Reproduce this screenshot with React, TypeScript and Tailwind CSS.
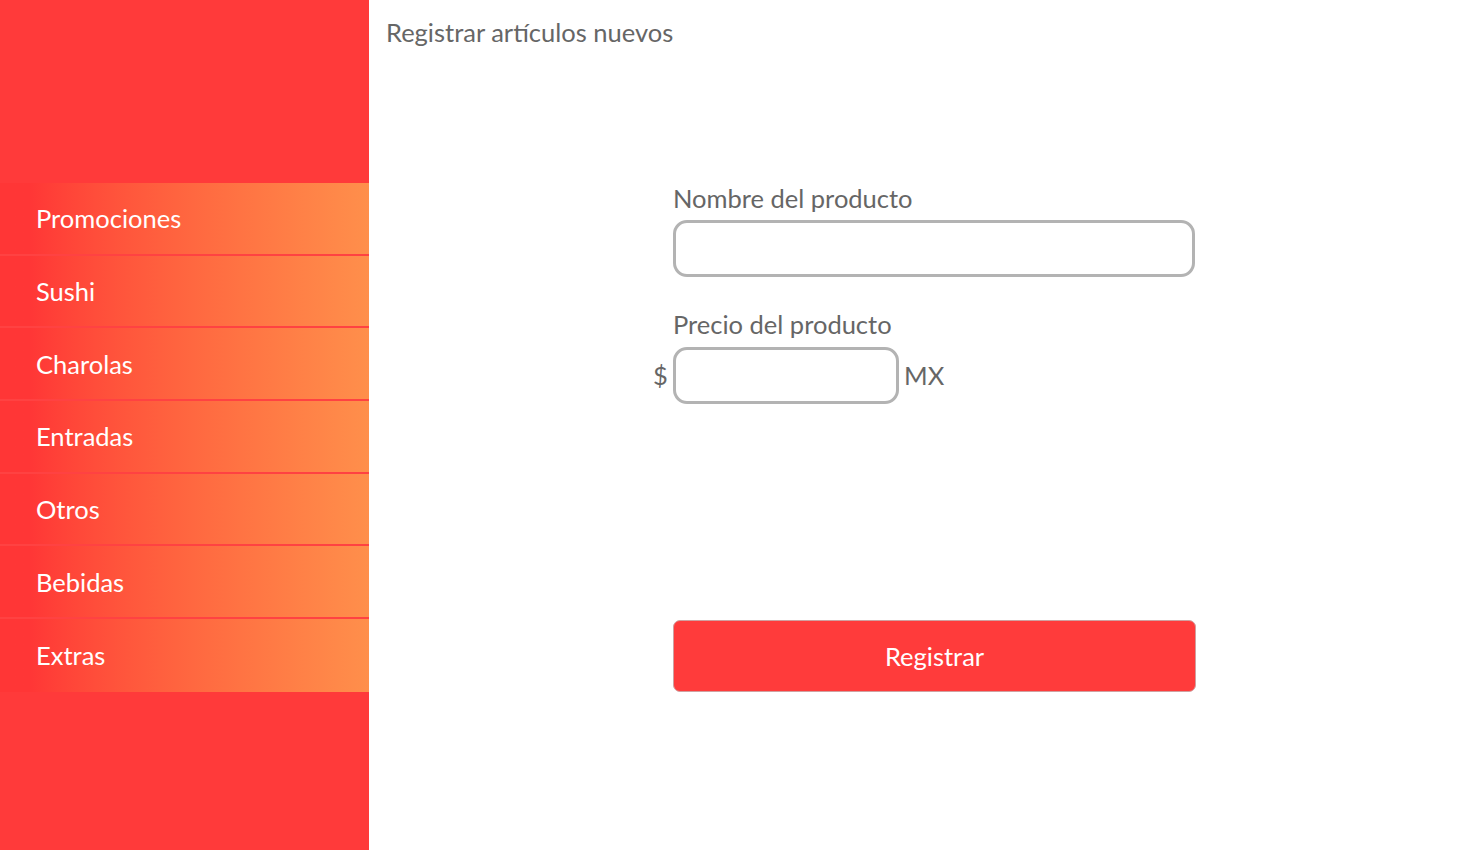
import React from "react";

const items = ["Promociones", "Sushi", "Charolas", "Entradas", "Otros", "Bebidas", "Extras"];

export default function App() {
  return (
    <div className="flex h-[850px] w-[1480px] bg-white font-normal" style={{ fontFamily: "Lato, 'Noto Sans', sans-serif" }}>
      <aside className="flex w-[369px] shrink-0 flex-col bg-[#ff3a3a]">
        <div className="h-[183px]" />
        {items.map((it, i) => (
          <div
            key={it}
            className={`flex h-[72.7px] items-center bg-gradient-to-r from-[#ff3636] from-[8%] to-[#ff8f4b] pl-[36px] text-[25.5px] text-white ${i < items.length - 1 ? "border-b-2 border-[#ff4242]" : ""}`}
          >
            {it}
          </div>
        ))}
      </aside>
      <main className="flex flex-1 flex-col">
        <h1 className="ml-[17px] mt-[15px] text-[25.5px] font-normal leading-[34px] text-[#666666]">Registrar artículos nuevos</h1>
        <div className="ml-[304px] mt-[132px] flex w-[523px] flex-col">
          <label className="text-[25.5px] leading-[34px] text-[#666666]">Nombre del producto</label>
          <input className="mt-[5px] h-[57px] w-[522px] rounded-[14px] border-[3px] border-[#b3b3b3] outline-none" />
          <label className="mt-[30px] text-[25.5px] leading-[34px] text-[#666666]">Precio del producto</label>
          <div className="relative mt-[6px] flex items-center">
            <span className="absolute left-[-20px] text-[25.5px] text-[#666666]">$</span>
            <input className="h-[57px] w-[226px] rounded-[14px] border-[3px] border-[#b3b3b3] outline-none" />
            <span className="ml-[5px] text-[25.5px] text-[#666666]">MX</span>
          </div>
          <button className="mt-[216px] h-[72px] w-[523px] rounded-[7px] border border-[#d0a0a0] bg-[#ff3b3b] text-[25.5px] font-normal text-white">
            Registrar
          </button>
        </div>
      </main>
    </div>
  );
}
